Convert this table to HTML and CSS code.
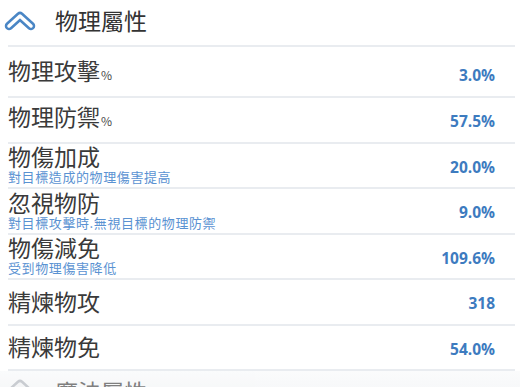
FILE: index.html
```html
<!DOCTYPE html>
<html lang="zh-Hant">
<head>
  <meta charset="UTF-8">
  <meta name="viewport" content="width=device-width, initial-scale=1.0">
  <title>物理屬性</title>
  <link rel="stylesheet" href="styles.css">
</head>
<body>
  <div class="panel">
    <div class="section-head">
      <svg class="chevron" width="40" height="45" viewBox="0 0 40 45">
        <polyline points="9,26 20,16 31,26" fill="none" stroke="#4a86c5" stroke-width="8.5" stroke-linecap="round" stroke-linejoin="round"/>
        <polyline points="9,26 20,16 31,26" fill="none" stroke="#fff" stroke-width="3.5" stroke-linecap="round" stroke-linejoin="round"/>
      </svg>
      <h2>物理屬性</h2>
    </div>

    <div class="stats">
      <div class="row first">
        <div class="label"><span class="name">物理攻擊<small>%</small></span></div>
        <div class="value">3.0%</div>
      </div>
      <div class="row">
        <div class="label"><span class="name">物理防禦<small>%</small></span></div>
        <div class="value">57.5%</div>
      </div>
      <div class="row">
        <div class="label">
          <span class="name">物傷加成</span>
          <span class="desc">對目標造成的物理傷害提高</span>
        </div>
        <div class="value">20.0%</div>
      </div>
      <div class="row">
        <div class="label">
          <span class="name">忽視物防</span>
          <span class="desc">對目標攻擊時.無視目標的物理防禦</span>
        </div>
        <div class="value">9.0%</div>
      </div>
      <div class="row">
        <div class="label">
          <span class="name">物傷減免</span>
          <span class="desc">受到物理傷害降低</span>
        </div>
        <div class="value">109.6%</div>
      </div>
      <div class="row">
        <div class="label"><span class="name">精煉物攻</span></div>
        <div class="value">318</div>
      </div>
      <div class="row">
        <div class="label"><span class="name">精煉物免</span></div>
        <div class="value">54.0%</div>
      </div>
    </div>

    <div class="section-head next">
      <svg class="chevron" width="40" height="45" viewBox="0 0 40 45">
        <polyline points="9,26 20,16 31,26" fill="none" stroke="#b7bcc2" stroke-width="8.5" stroke-linecap="round" stroke-linejoin="round"/>
        <polyline points="9,26 20,16 31,26" fill="none" stroke="#f1f2f4" stroke-width="3.5" stroke-linecap="round" stroke-linejoin="round"/>
      </svg>
      <h2>魔法屬性</h2>
    </div>
  </div>
</body>
</html>
```

FILE: styles.css
```css
* {
  margin: 0;
  padding: 0;
  box-sizing: border-box;
}

body {
  width: 520px;
  height: 387px;
  overflow: hidden;
  background: #fff;
  font-family: "Noto Sans CJK TC", "Noto Sans", sans-serif;
  color: #383838;
}

.panel {
  display: flex;
  flex-direction: column;
}

.section-head {
  display: flex;
  align-items: center;
  height: 47px;
  margin: 0 5px 0 8px;
  border-bottom: 2px solid #e9ecf0;
}

.section-head .chevron {
  margin-left: -8px;
  flex-shrink: 0;
}

.section-head h2 {
  font-size: 23px;
  font-weight: 400;
  line-height: 1;
  margin-left: 15px;
  margin-top: -4px;
  color: #333;
}

.stats {
  display: flex;
  flex-direction: column;
}

.row {
  display: flex;
  align-items: center;
  justify-content: space-between;
  height: 45.5px;
  margin: 0 5px 0 8px;
  padding-right: 20px;
  border-bottom: 2px solid #e9ecf0;
}

.row.first {
  height: 51px;
  padding-top: 4px;
}

.label {
  display: flex;
  flex-direction: column;
  margin-top: -2px;
}

.name {
  font-size: 23px;
  line-height: 24px;
  color: #3a3a3a;
}

.name small {
  font-size: 12px;
  margin-left: 1px;
  color: #4a4a4a;
}

.desc {
  font-size: 13px;
  line-height: 14px;
  margin-top: 2px;
  color: #5a92d2;
  letter-spacing: 0.6px;
}

.value {
  font-family: "Open Sans", "Liberation Sans", sans-serif;
  font-weight: 700;
  font-size: 15.5px;
  color: #3d7bbf;
  padding-top: 3px;
}

.section-head.next {
  margin: 0;
  padding-left: 8px;
  border-bottom: none;
  background: linear-gradient(#f9fafb, #eceef1);
  opacity: 0.75;
}

.section-head.next h2 {
  color: #555;
  margin-top: -6px;
}

.section-head.next .chevron {
  margin-top: -8px;
}
```
